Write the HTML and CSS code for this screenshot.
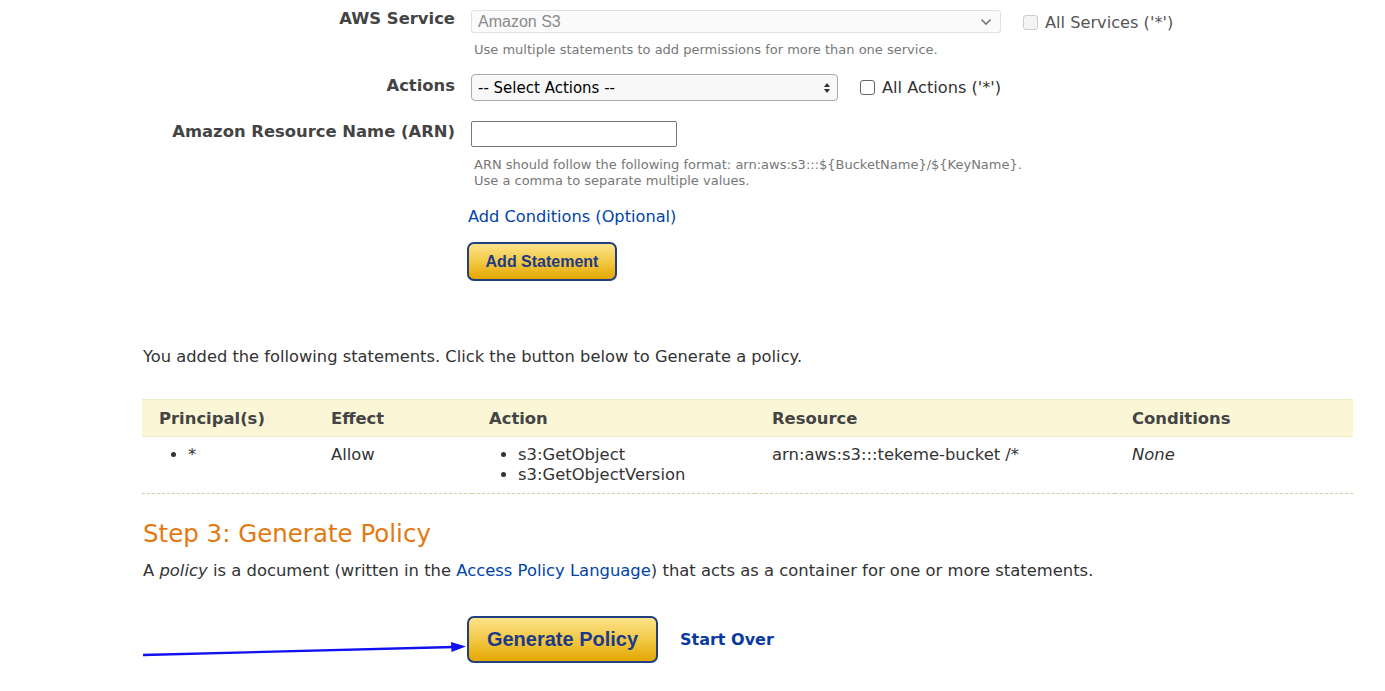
FILE: index.html
```html
<!DOCTYPE html>
<html>
<head>
<meta charset="utf-8">
<link rel="stylesheet" href="styles.css">
</head>
<body>
<div class="page">
  <div class="form">
    <div class="row row-service">
      <div class="label">AWS Service</div>
      <div class="field">
        <div class="inline">
          <div class="select select-disabled">
            <span>Amazon S3</span>
            <svg class="chev" width="12" height="8" viewBox="0 0 12 8"><path d="M1.5 1.5 L6 6 L10.5 1.5" fill="none" stroke="#777" stroke-width="1.6"/></svg>
          </div>
          <label class="check check-disabled"><span class="box"></span>All Services ('*')</label>
        </div>
        <div class="help help-one">Use multiple statements to add permissions for more than one service.</div>
      </div>
    </div>
    <div class="row row-actions">
      <div class="label">Actions</div>
      <div class="field">
        <div class="inline">
          <div class="select select-actions">
            <span>-- Select Actions --</span>
            <svg class="updown" width="8" height="12" viewBox="0 0 8 12"><path d="M4 1 L7 5 L1 5 Z M4 11 L7 7 L1 7 Z" fill="#333"/></svg>
          </div>
          <label class="check"><span class="box box-on"></span>All Actions ('*')</label>
        </div>
      </div>
    </div>
    <div class="row row-arn">
      <div class="label">Amazon Resource Name (ARN)</div>
      <div class="field">
        <div class="textbox"></div>
        <div class="help help-arn">ARN should follow the following format: arn:aws:s3:::${BucketName}/${KeyName}.<br>Use a comma to separate multiple values.</div>
        <a class="link conditions">Add Conditions (Optional)</a>
        <div class="btn btn-small">Add Statement</div>
      </div>
    </div>
  </div>

  <p class="intro">You added the following statements. Click the button below to Generate a policy.</p>

  <table class="stmts">
    <colgroup>
      <col class="c1"><col class="c2"><col class="c3"><col class="c4"><col class="c5">
    </colgroup>
    <thead>
      <tr>
        <th>Principal(s)</th>
        <th>Effect</th>
        <th>Action</th>
        <th>Resource</th>
        <th>Conditions</th>
      </tr>
    </thead>
    <tbody>
      <tr>
        <td><ul><li>*</li></ul></td>
        <td>Allow</td>
        <td><ul><li>s3:GetObject</li><li>s3:GetObjectVersion</li></ul></td>
        <td>arn:aws:s3:::tekeme-bucket /*</td>
        <td><em>None</em></td>
      </tr>
    </tbody>
  </table>

  <h2 class="step">Step 3: Generate Policy</h2>
  <p class="desc">A <em>policy</em> is a document (written in the <a class="link">Access Policy Language</a>) that acts as a container for one or more statements.</p>

  <div class="actions-bar">
    <div class="btn btn-big">Generate Policy</div>
    <a class="startover">Start Over</a>
  </div>

  <svg class="arrow" width="340" height="30" viewBox="0 0 340 30">
    <path d="M1 22 L312 14" stroke="#1010f0" stroke-width="2.4" fill="none"/>
    <path d="M309 9 L324 13.5 L309.5 19 Z" fill="#1010f0"/>
  </svg>
</div>
</body>
</html>
```

FILE: styles.css
```css
html, body {
  margin: 0;
  padding: 0;
  background: #fff;
}
body {
  font-family: "DejaVu Sans", sans-serif;
  color: #333;
  font-size: 16px;
}
.page {
  position: relative;
  padding-left: 142px;
  width: 1211px;
  padding-top: 9px;
}
.row {
  display: flex;
  gap: 16px;
}
.label {
  width: 313px;
  flex: none;
  text-align: right;
  font-family: "DejaVu Sans", sans-serif;
  font-weight: bold;
  font-size: 16.4px;
  line-height: 20px;
  color: #444;
}
.field {
  display: flex;
  flex-direction: column;
  align-items: flex-start;
}
.inline {
  display: flex;
  align-items: center;
}
.select {
  box-sizing: border-box;
  display: flex;
  align-items: center;
  justify-content: space-between;
  border: 1px solid #c8c8c8;
  border-radius: 3px;
  background: #fff;
  padding: 0 8px 0 6px;
}
.select-disabled {
  width: 530px;
  height: 23px;
  margin-top: 1px;
  background: #fafafa;
  border-color: #e1e1e1;
  font-family: "Liberation Sans", sans-serif;
  color: #8a8a8a;
  font-size: 16px;
}
.select-actions {
  width: 367px;
  height: 27px;
  background: #f8f8f8;
  border-color: #aaa;
  border-radius: 4px;
  color: #000;
  font-size: 15px;
  padding-right: 6px;
}
.check {
  display: flex;
  align-items: center;
  gap: 7px;
  font-size: 16.2px;
  color: #333;
  margin-left: 22px;
}
.check-disabled {
  color: #555;
  margin-left: 22px;
  margin-top: 3px;
}
.box {
  width: 13px;
  height: 13px;
  border: 1px solid #ccc;
  border-radius: 3px;
  background: #f4f4f4;
  display: inline-block;
}
.box-on {
  border-color: #666;
  background: #fff;
}
.help {
  font-size: 13px;
  line-height: 16px;
  color: #777;
  padding-left: 3px;
}
.help-one {
  margin-top: 9px;
}
.row-actions {
  margin-top: 16px;
}
.row-actions .label {
  padding-top: 2px;
}
.row-arn {
  margin-top: 20px;
}
.row-arn .label {
  padding-top: 1px;
}
.textbox {
  box-sizing: border-box;
  width: 206px;
  height: 26px;
  border: 1px solid #767676;
  border-radius: 2px;
  background: #fff;
}
.help-arn {
  margin-top: 10px;
}
.link {
  color: #0044aa;
  text-decoration: none;
}
.conditions {
  margin-top: 18px;
  margin-left: -3px;
  font-size: 16.2px;
  line-height: 20px;
}
.btn {
  box-sizing: border-box;
  display: flex;
  align-items: center;
  justify-content: center;
  border: 2px solid #213f7e;
  border-radius: 7px;
  background: linear-gradient(#fde38a, #f1c63f 55%, #e3a700);
  color: #1e3a86;
  font-family: "Liberation Sans", sans-serif;
  font-weight: bold;
}
.btn-small {
  width: 150px;
  height: 39px;
  margin-top: 15px;
  margin-left: -4px;
  font-size: 16px;
}
.intro {
  margin: 66px 0 0 1px;
  font-size: 16.3px;
  line-height: 20px;
}
.stmts {
  margin-top: 32px;
  width: 1211px;
  border-collapse: collapse;
  table-layout: fixed;
  font-size: 16.4px;
}
.c1 { width: 172px; }
.c2 { width: 158px; }
.c3 { width: 283px; }
.c4 { width: 360px; }
.c5 { width: 238px; }
.stmts th {
  text-align: left;
  background: #faf6d6;
  border-top: 1px solid #efebc6;
  border-bottom: 1px solid #efebc6;
  height: 36px;
  padding: 0 0 0 17px;
  font-family: "DejaVu Sans", sans-serif;
  font-weight: bold;
  color: #444;
  font-size: 16.4px;
}
.stmts td {
  vertical-align: top;
  padding: 8px 0 8px 17px;
  height: 39px;
  line-height: 20px;
  border-bottom: 1px dashed #c9d1a6;
  color: #333;
}
.stmts ul {
  margin: 0;
  padding-left: 29px;
}
.step {
  margin: 25px 0 0 1px;
  font-weight: normal;
  font-size: 24.5px;
  line-height: 30px;
  color: #e47911;
}
.desc {
  margin: 12px 0 0 1px;
  font-size: 16.4px;
  line-height: 20px;
}
.actions-bar {
  display: flex;
  align-items: center;
  margin-top: 35px;
  margin-left: 325px;
  gap: 22px;
}
.btn-big {
  width: 191px;
  height: 47px;
  font-size: 20px;
}
.startover {
  font-family: "DejaVu Sans", sans-serif;
  font-weight: bold;
  font-size: 16px;
  color: #0b3a9e;
}
.arrow {
  position: absolute;
  left: 142px;
  top: 633px;
}
```
